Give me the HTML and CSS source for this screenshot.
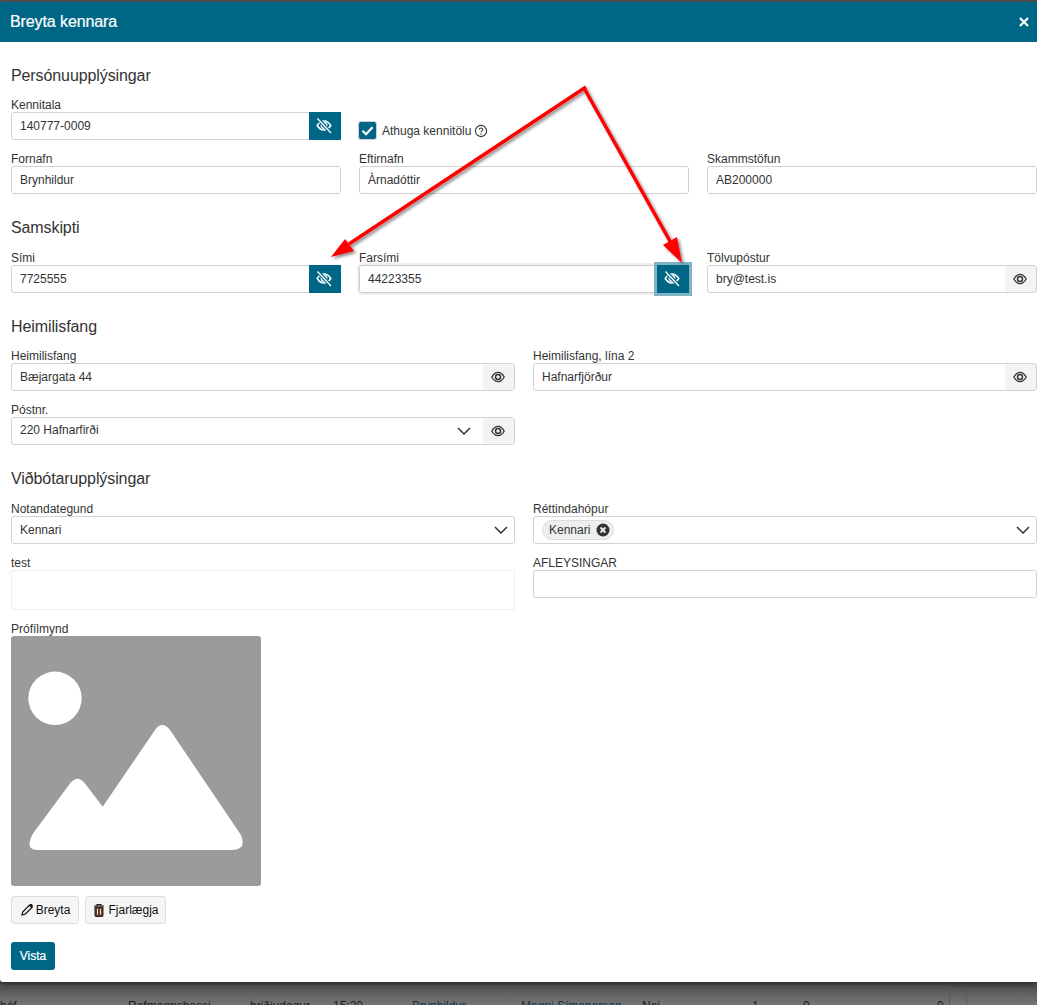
FILE: index.html
```html
<!DOCTYPE html>
<html lang="en">
<head>
    <meta charset="UTF-8">
    <title>Breyta kennara</title>
    <link rel="stylesheet" href="styles.css">
</head>
<body>
    <svg width="0" height="0" class="defs">
        <symbol id="eye" viewBox="0 0 14 14">
            <path d="M.8 7C2.500 4 4.600 2.300 7 2.300S11.500 4 13.200 7c-1.700 3-3.800 4.700-6.200 4.700S2.500 10 .8 7z" fill="none" stroke="currentColor" stroke-width="1.300"/>
            <circle cx="7" cy="7" r="2.500" fill="none" stroke="currentColor" stroke-width="1.500"/>
        </symbol>
        <symbol id="eye-off" viewBox="0 0 16 16">
            <path d="M1.200 7.500C3 4.600 5.200 3 8 3s5 1.600 6.800 4.500C13 10.400 10.800 12 8 12s-5-1.600-6.800-4.500z" fill="none" stroke="currentColor" stroke-width="1.500"/>
            <circle cx="8" cy="7.500" r="2.700" fill="none" stroke="currentColor" stroke-width="1.500"/>
            <path d="M2 .5l12.500 14" stroke="#006685" stroke-width="3.400"/>
            <path d="M1.500 .5 15 15" stroke="currentColor" stroke-width="1.300"/>
        </symbol>
        <symbol id="chevron" viewBox="0 0 14 8">
            <path d="M1 1l6 6 6-6" fill="none" stroke="currentColor" stroke-width="1.500"/>
        </symbol>
    </svg>

    <div class="modal">
        <div class="modal-header">
            <h1 class="modal-title">Breyta kennara</h1>
            <svg class="close-icon" viewBox="0 0 10 10"><path d="M1 1l8 8M9 1l-8 8" stroke="#fff" stroke-width="2.200"/></svg>
        </div>

        <div class="modal-body">
            <h2 class="section-title">Persónuupplýsingar</h2>
            <div class="grid-3">
                <div class="field">
                    <label class="field-label">Kennitala</label>
                    <div class="input-group">
                        <div class="input-text">140777-0009</div>
                        <div class="eye-btn eye-btn-on"><svg class="eye-off-icon"><use href="#eye-off"/></svg></div>
                    </div>
                </div>
                <div class="check-row">
                    <span class="checkbox">
                        <svg viewBox="0 0 17 17"><path d="M3.500 8.800l3.500 3.400 6.500-7" fill="none" stroke="#fff" stroke-width="2.200"/></svg>
                    </span>
                    <span class="check-label">Athuga kennitölu</span>
                    <svg class="help-icon" viewBox="0 0 14 14">
                        <circle cx="7" cy="7" r="5.600" fill="none" stroke="#333" stroke-width="1.100"/>
                        <path d="M5.300 5.600c0-2.200 3.500-2.200 3.500-.1 0 1.400-1.800 1.300-1.800 2.800" fill="none" stroke="#333" stroke-width="1.100"/>
                        <circle cx="7" cy="10" r=".7" fill="#333"/>
                    </svg>
                </div>
                <div></div>
                <div class="field">
                    <label class="field-label">Fornafn</label>
                    <div class="input-text input-box">Brynhildur</div>
                </div>
                <div class="field">
                    <label class="field-label">Eftirnafn</label>
                    <div class="input-text input-box">Àrnadóttir</div>
                </div>
                <div class="field">
                    <label class="field-label">Skammstöfun</label>
                    <div class="input-text input-box">AB200000</div>
                </div>
            </div>

            <h2 class="section-title section-title-wide">Samskipti</h2>
            <div class="grid-3">
                <div class="field">
                    <label class="field-label">Sími</label>
                    <div class="input-group">
                        <div class="input-text">7725555</div>
                        <div class="eye-btn eye-btn-on"><svg class="eye-off-icon"><use href="#eye-off"/></svg></div>
                    </div>
                </div>
                <div class="field">
                    <label class="field-label">Farsími</label>
                    <div class="input-group input-group-focus">
                        <div class="input-text">44223355</div>
                        <div class="eye-btn eye-btn-on eye-btn-focus"><svg class="eye-off-icon"><use href="#eye-off"/></svg></div>
                    </div>
                </div>
                <div class="field">
                    <label class="field-label">Tölvupóstur</label>
                    <div class="input-group">
                        <div class="input-text">bry@test.is</div>
                        <div class="eye-btn"><svg class="eye-icon"><use href="#eye"/></svg></div>
                    </div>
                </div>
            </div>

            <h2 class="section-title">Heimilisfang</h2>
            <div class="grid-2">
                <div class="field">
                    <label class="field-label">Heimilisfang</label>
                    <div class="input-group">
                        <div class="input-text">Bæjargata 44</div>
                        <div class="eye-btn"><svg class="eye-icon"><use href="#eye"/></svg></div>
                    </div>
                </div>
                <div class="field">
                    <label class="field-label">Heimilisfang, lína 2</label>
                    <div class="input-group">
                        <div class="input-text">Hafnarfjörður</div>
                        <div class="eye-btn"><svg class="eye-icon"><use href="#eye"/></svg></div>
                    </div>
                </div>
                <div class="field">
                    <label class="field-label">Póstnr.</label>
                    <div class="input-group">
                        <div class="input-text input-text-select">220 Hafnarfirði</div>
                        <svg class="chevron"><use href="#chevron"/></svg>
                        <div class="eye-btn"><svg class="eye-icon"><use href="#eye"/></svg></div>
                    </div>
                </div>
            </div>

            <h2 class="section-title section-title-wide">Viðbótarupplýsingar</h2>
            <div class="grid-2">
                <div class="field">
                    <label class="field-label">Notandategund</label>
                    <div class="input-group">
                        <div class="input-text">Kennari</div>
                        <svg class="chevron chevron-end"><use href="#chevron"/></svg>
                    </div>
                </div>
                <div class="field">
                    <label class="field-label">Réttindahópur</label>
                    <div class="input-group">
                        <div class="chip-area">
                            <span class="chip">Kennari
                                <svg class="chip-x" viewBox="0 0 14 14">
                                    <circle cx="7" cy="7" r="6.500" fill="#333"/>
                                    <path d="M4.500 4.500l5 5M9.500 4.500l-5 5" stroke="#eee" stroke-width="1.800"/>
                                </svg>
                            </span>
                        </div>
                        <svg class="chevron chevron-end"><use href="#chevron"/></svg>
                    </div>
                </div>
                <div class="field">
                    <label class="field-label">test</label>
                    <div class="textarea-box"></div>
                </div>
                <div class="field">
                    <label class="field-label">AFLEYSINGAR</label>
                    <div class="input-text input-box"></div>
                </div>
            </div>

            <div class="picture-block">
                <label class="field-label">Prófílmynd</label>
                <svg class="picture" viewBox="0 0 250 250">
                    <rect width="250" height="250" rx="3" fill="#9a9b9a"/>
                    <circle cx="44" cy="62.300" r="26.700" fill="#fff"/>
                    <path d="M22 197.500 59 147.500Q66.500 138 74 147.500L91.700 170.700 144 94Q151 84 159 94L230 199Q236 214 220.700 214H27Q13 214 22 197.500z" fill="#fff"/>
                </svg>
                <div class="picture-actions">
                    <button class="btn-light btn-edit">
                        <svg class="btn-icon" viewBox="0 0 14 14"><path d="M2 12l.7-3L9.500 2l2.500 2.500-6.900 6.800z" fill="none" stroke="#111" stroke-width="1.200"/><path d="M9 2.500l1-1c.6-.6 1.400-.6 2 0l.5.5c.6.600.6 1.400 0 2l-1 1z" fill="#111"/></svg>
                        Breyta
                    </button>
                    <button class="btn-light btn-remove">
                        <svg class="btn-icon" viewBox="0 0 14 14"><path d="M3 4h8v8.500c0 .6-.4 1-1 1H4c-.6 0-1-.4-1-1z" fill="#6b3a20" stroke="#222" stroke-width="1"/><path d="M2 3h10M5 3V1.500h4V3" fill="none" stroke="#222" stroke-width="1.200"/><path d="M5.500 6v5.500M8.500 6v5.500" stroke="#eee" stroke-width="1"/></svg>
                        Fjarlægja
                    </button>
                </div>
            </div>

            <button class="btn-save">Vista</button>
        </div>
    </div>

    <div class="backdrop">
        <div class="backdrop-row">
            <span>hóf</span>
            <span>Rafmagnsbassi</span>
            <span>þriðjudagur</span>
            <span>15:20</span>
            <span class="link">Brynhildur</span>
            <span class="link">Magni Símonarson</span>
            <span>Nei</span>
            <span>1</span>
            <span>0</span>
            <span>0</span>
        </div>
        <div class="backdrop-side"></div>
    </div>

    <!-- annotation arrows drawn over the page -->
    <svg class="arrows" viewBox="0 0 1037 1005">
        <defs>
            <filter id="arrow-shadow" x="-10%" y="-10%" width="120%" height="120%">
                <feDropShadow dx="2" dy="2" stdDeviation="1.500" flood-color="#000" flood-opacity=".45"/>
            </filter>
        </defs>
        <g filter="url(#arrow-shadow)">
            <path d="M586 87 349 244M584 88 671 243" fill="none" stroke="#f00" stroke-width="3.500"/>
            <path d="M331 257 345 239 354 251z" fill="#f00"/>
            <path d="M682 263 663 245 677 237z" fill="#f00"/>
        </g>
    </svg>
</body>
</html>
```

FILE: styles.css
```css
* {
    box-sizing: border-box;
}

body {
    margin: 0;
    width: 1037px;
    height: 1005px;
    overflow: hidden;
    display: flex;
    flex-direction: column;
    position: relative;
    padding-top: 2px;
    background-color: #555;
    font-family: "Liberation Sans", Arial, sans-serif;
    font-size: 12px;
    color: #333;
}

.defs {
    position: absolute;
}

.modal {
    height: 980px;
    flex: none;
    background-color: #fff;
    position: relative;
    z-index: 1;
    box-shadow: 0 2px 6px rgba(0, 0, 0, 0.5);
    border-bottom-left-radius: 3px;
}

.modal-header {
    height: 40px;
    background-color: #006685;
    display: flex;
    justify-content: space-between;
    align-items: center;
    padding: 0 8px 0 10px;
}

.modal-title {
    margin: 0;
    font-size: 16px;
    font-weight: normal;
    letter-spacing: -0.1px;
    color: #fff;
    -webkit-text-stroke: 0.2px #fff;
}

.close-icon {
    width: 10px;
    height: 10px;
}

.modal-body {
    padding: 0 0 0 11px;
}

.section-title {
    margin: 0;
    padding-top: 25px;
    height: 52px;
    line-height: 18px;
    font-size: 16px;
    font-weight: normal;
    letter-spacing: -0.1px;
}

.section-title-wide {
    height: 53px;
}

.grid-3 {
    display: grid;
    grid-template-columns: repeat(3, 330px);
    column-gap: 18px;
    row-gap: 8px;
}

.grid-2 {
    display: grid;
    grid-template-columns: repeat(2, 504px);
    column-gap: 18px;
    row-gap: 8px;
}

.field-label {
    display: block;
    height: 18px;
    line-height: 22px;
}

.input-group,
.input-box {
    height: 28px;
    border: 1px solid #d2d2d2;
    border-radius: 3px;
    background-color: #fff;
}

.input-group {
    display: flex;
    align-items: center;
}

.input-group-focus {
    box-shadow: 0 0 0 2px #eeeeee;
    border-color: #ccc;
}

.input-text {
    flex: 1;
    padding-left: 8px;
    line-height: 26px;
    color: #333;
}

.input-text-select {
    line-height: 24px;
    height: 26px;
}

.eye-btn {
    width: 31px;
    height: 26px;
    flex: none;
    display: flex;
    align-items: center;
    justify-content: center;
    background-color: #f3f3f3;
    color: #333;
    border-radius: 0 2px 2px 0;
}

.eye-btn-on {
    width: 32px;
    height: 28px;
    margin: -1px;
    background-color: #006685;
    color: #fff;
    border-radius: 0;
}

.eye-btn-focus {
    box-shadow: 0 0 0 3px #7fb2c2;
    position: relative;
}

.eye-icon {
    width: 14px;
    height: 14px;
    margin-right: 1px;
}

.eye-off-icon {
    width: 16px;
    height: 16px;
    margin-right: 2px;
}

.chevron {
    width: 14px;
    height: 8px;
    margin-right: 12px;
    flex: none;
    color: #333;
}

.chevron-end {
    margin-right: 6px;
}

.check-row {
    display: flex;
    align-items: center;
    padding-top: 27px;
    height: 46px;
}

.checkbox {
    width: 17px;
    height: 17px;
    border-radius: 2px;
    background-color: #006685;
    box-shadow: 0 0 0 1px #ccd;
    display: flex;
}

.check-label {
    margin-left: 6px;
}

.help-icon {
    width: 14px;
    height: 14px;
    margin-left: 3px;
}

.chip-area {
    flex: 1;
    padding-left: 8px;
    display: flex;
}

.chip {
    height: 20px;
    display: flex;
    align-items: center;
    gap: 7px;
    padding: 0 3px 0 6px;
    background-color: #eee;
    border: 1px solid #ddd;
    border-radius: 10px;
    margin-right: -1px;
}

.chip-x {
    width: 14px;
    height: 14px;
    margin-left: -1px;
}

.textarea-box {
    height: 40px;
    border: 1px solid #eeeeee;
    background-color: #fff;
}

.picture-block {
    margin-top: 8px;
}

.picture {
    display: block;
    width: 250px;
    height: 250px;
}

.picture-actions {
    display: flex;
    gap: 6px;
    margin-top: 10px;
}

.btn-light {
    height: 28px;
    padding: 0;
    display: flex;
    align-items: center;
    justify-content: center;
    gap: 2px;
    background-color: #f5f5f5;
    border: 1px solid #ddd;
    border-radius: 3px;
    font-family: inherit;
    font-size: 12px;
    color: #111;
}

.btn-edit {
    width: 68px;
}

.btn-remove {
    width: 81px;
}

.btn-icon {
    width: 14px;
    height: 14px;
}

.btn-save {
    display: block;
    margin-top: 18px;
    height: 28px;
    width: 44px;
    padding: 0;
    background-color: #006685;
    border: none;
    border-radius: 3px;
    font-family: inherit;
    font-size: 12px;
    font-weight: normal;
    -webkit-text-stroke: 0.2px #fff;
    color: #fff;
}

.backdrop {
    flex: 1;
    display: flex;
    background: linear-gradient(#4a4a4a, #767676);
    overflow: hidden;
}

.backdrop-row {
    width: 950px;
    margin-top: 3px;
    padding-top: 12px;
    border-top: 1px solid #5a5a5a;
    border-right: 1px solid #5a5a5a;
    display: grid;
    grid-template-columns: 128px 122px 83px 79px 109px 121px 110px 51px 134px 1fr;
    line-height: 16px;
    font-size: 12px;
    color: #1d1d1d;
}

.link {
    color: #10344a;
}

.backdrop-side {
    width: 17px;
    border-right: 1px solid #5a5a5a;
}

.arrows {
    position: absolute;
    left: 0;
    top: 0;
    width: 1037px;
    height: 1005px;
    z-index: 2;
    pointer-events: none;
}
```
